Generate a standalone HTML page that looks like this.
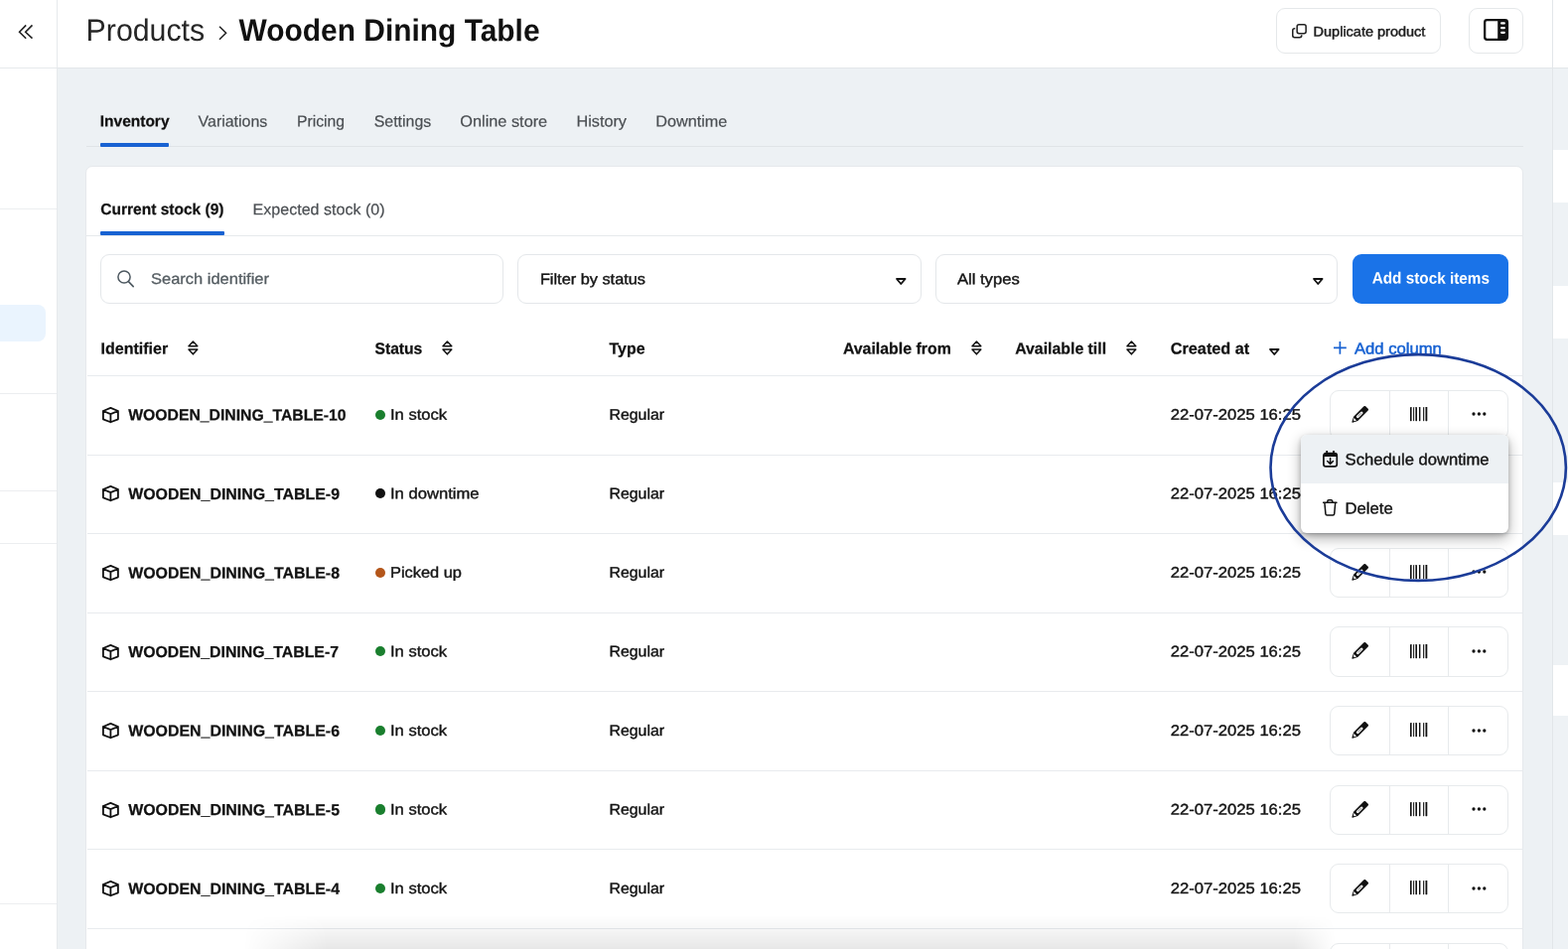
<!DOCTYPE html>
<html lang="en">
<head>
<meta charset="utf-8">
<title>Wooden Dining Table - Inventory</title>
<style>
html,body{margin:0;padding:0;width:1579px;height:956px;overflow:hidden}
body{position:relative;background:#edf1f4;font-family:"Liberation Sans", sans-serif}
#app{position:absolute;left:0;top:0;width:1579px;height:956px;overflow:hidden;background:#edf1f4}
.abs,.t,.i,.hl,.dot,.grp,.sw,.sl,.box{position:absolute}
.t{left:0;top:0;white-space:pre;line-height:1;transform-origin:0 0}
.i{overflow:visible}
.tw{position:absolute;left:0;top:0;width:1579px;height:956px;will-change:transform}
#sidebar{left:0;top:0;width:57px;height:956px;background:#fff;border-right:1px solid #e6e9ec}
.sl{left:0;width:57px;height:1px;background:#eceef0}
#navhl{left:0;top:307.4px;width:46.2px;height:36.6px;background:#eaf4fe;border-radius:0 8px 8px 0}
#header{left:58px;top:0;width:1505px;height:68px;background:#fff;border-bottom:1px solid #e3e7ea}
#sidehead{left:0;top:68px;width:57px;height:1px;background:#e6e9ec}
#rstrip{left:1563px;top:0;width:16px;height:956px;background:#eef2f5;border-left:1px solid #e2e6e9;box-sizing:border-box}
#rstrip .top{position:absolute;left:0;top:0;width:16px;height:68px;background:#fff;border-bottom:1px solid #e3e7ea}
.sw{left:0;width:16px;background:#fff}
.btn{background:#fff;border:1px solid #e5e8ea;border-radius:9px;box-sizing:border-box}
#tabline{left:87px;top:146.5px;width:1447px;height:1px;background:#e0e4e7}
#tabul{left:100.8px;top:144px;width:69.6px;height:3.5px;background:#1862d2;border-radius:1px}
#card{left:86.4px;top:166.5px;width:1447.4px;height:800px;background:#fff;border:1px solid #e6e9ec;border-radius:7px;box-sizing:border-box}
#itabline{left:87px;top:236.6px;width:1446.6px;height:1.2px;background:#e6e9ec}
#itabul{left:101px;top:233.3px;width:124.6px;height:3.5px;background:#1862d2;border-radius:1px}
.inp{top:256px;height:50px;background:#fff;border:1px solid #e4e7ea;border-radius:9px;box-sizing:border-box}
#addbtn{left:1362.4px;top:256px;width:156.6px;height:50px;background:#1a73e8;border-radius:9px}
.hl{left:87.5px;width:1445.6px;height:1.2px;background:#e8ebee}
.dot{width:10.4px;height:10.4px;border-radius:50%}
.grp{left:1339px;width:180px;height:50.4px;border:1px solid #e7eaec;border-radius:9px;box-sizing:border-box;background:#fff}
.grp i{position:absolute;top:0;width:1px;height:100%;background:#e7eaec}
.grp i:nth-child(1){left:58.5px}
.grp i:nth-child(2){left:118.3px}
#menu{left:1310px;top:438.2px;width:209.2px;height:98.4px;background:#fff;border-radius:6px;box-shadow:0 5px 14px rgba(0,0,0,.32),0 2px 5px rgba(0,0,0,.2);overflow:hidden}
#menu .sel{position:absolute;left:0;top:0;width:100%;height:49.2px;background:#edf1f4}
#botshadow{left:245px;top:922px;width:1100px;height:34px;background:linear-gradient(to bottom,rgba(0,0,0,0),rgba(0,0,0,.035) 40%,rgba(0,0,0,.095));-webkit-mask-image:linear-gradient(to right,transparent 0,#000 85px,#000 1058px,transparent 1100px);mask-image:linear-gradient(to right,transparent 0,#000 85px,#000 1058px,transparent 1100px)}
#ring{left:0;top:0}
</style>
</head>
<body>
<div id="app">
<div id="sidebar" class="abs"></div>
<div id="navhl" class="abs"></div>
<div class="sl" style="top:210px"></div><div class="sl" style="top:396px"></div><div class="sl" style="top:493.5px"></div><div class="sl" style="top:546.5px"></div><div class="sl" style="top:910px"></div>
<div id="header" class="abs"></div>
<div id="sidehead" class="abs"></div>
<div id="rstrip" class="abs"><div class="top"></div><div class="sw" style="top:150.5px;height:53.0px"></div><div class="sw" style="top:288px;height:52.5px"></div><div class="sw" style="top:486px;height:53px"></div><div class="sw" style="top:669.7px;height:51.799999999999955px"></div></div>
<div class="abs btn" style="left:1284.9px;top:8.4px;width:165.8px;height:45.2px"></div>
<div class="abs btn" style="left:1479.4px;top:8.4px;width:55.1px;height:45.2px"></div>
<div id="tabline" class="abs"></div>
<div id="tabul" class="abs"></div>
<div id="card" class="abs"></div>
<div id="itabline" class="abs"></div>
<div id="itabul" class="abs"></div>
<div class="abs inp" style="left:101px;width:406px"></div>
<div class="abs inp" style="left:521.4px;width:406.4px"></div>
<div class="abs inp" style="left:941.8px;width:405.6px"></div>
<div id="addbtn" class="abs"></div>
<div class="hl" style="top:378.0px"></div>
<div class="hl" style="top:457.6px"></div>
<div class="dot" style="left:377.8px;top:412.5px;background:#1a7f2e"></div>
<div class="grp" style="top:392.8px"><i></i><i></i></div>
<div class="hl" style="top:537.1px"></div>
<div class="dot" style="left:377.8px;top:492.0px;background:#111"></div>
<div class="grp" style="top:472.3px"><i></i><i></i></div>
<div class="hl" style="top:616.6px"></div>
<div class="dot" style="left:377.8px;top:571.6px;background:#b4561a"></div>
<div class="grp" style="top:551.9px"><i></i><i></i></div>
<div class="hl" style="top:696.2px"></div>
<div class="dot" style="left:377.8px;top:651.1px;background:#1a7f2e"></div>
<div class="grp" style="top:631.4px"><i></i><i></i></div>
<div class="hl" style="top:775.8px"></div>
<div class="dot" style="left:377.8px;top:730.7px;background:#1a7f2e"></div>
<div class="grp" style="top:711.0px"><i></i><i></i></div>
<div class="hl" style="top:855.3px"></div>
<div class="dot" style="left:377.8px;top:810.2px;background:#1a7f2e"></div>
<div class="grp" style="top:790.5px"><i></i><i></i></div>
<div class="hl" style="top:934.9px"></div>
<div class="dot" style="left:377.8px;top:889.8px;background:#1a7f2e"></div>
<div class="grp" style="top:870.1px"><i></i><i></i></div>
<div class="grp" style="top:949.6px"><i></i><i></i></div>
<svg class="i" style="left:18.0px;top:24.0px" width="16" height="16" viewBox="0 0 16 16" preserveAspectRatio="none" ><path d="M8.2 1.4 L1.6 8.3 L8.2 14.7 M14.5 1.4 L7.7 8.3 L14.5 14.7" fill="none" stroke="#222" stroke-width="1.6" stroke-linejoin="miter"/></svg>
<svg class="i" style="left:220.3px;top:25.6px" width="8.8" height="14.6" viewBox="0 0 8.8 14.6" preserveAspectRatio="none" ><path d="M1 0.8 L7.6 7.3 L1 13.8" fill="none" stroke="#222" stroke-width="1.5"/></svg>
<svg class="i" style="left:1300.9px;top:24.0px" width="14.9" height="14.4" viewBox="0 0 15.6 15.2" preserveAspectRatio="none" ><rect x="5.4" y="0.8" width="9.4" height="9.4" rx="2" fill="none" stroke="#222" stroke-width="1.6"/><path d="M3.4 5 H2.8 a2 2 0 0 0 -2 2 V12.4 a2 2 0 0 0 2 2 H8.2 a2 2 0 0 0 2 -2 V12" fill="none" stroke="#222" stroke-width="1.6"/></svg>
<svg class="i" style="left:1493.9px;top:19.4px" width="25.1" height="22" viewBox="0 0 25.1 22" preserveAspectRatio="none" ><rect x="1.15" y="1.15" width="22.8" height="19.7" rx="2.3" fill="none" stroke="#111" stroke-width="2.3"/><path d="M14.2 1.15 H21.6 a2.3 2.3 0 0 1 2.3 2.3 V18.5 a2.3 2.3 0 0 1 -2.3 2.3 H14.2 Z" fill="#111"/><rect x="17" y="3.3" width="4.9" height="2.3" rx="1.15" fill="#fff"/><rect x="17" y="8.0" width="4.9" height="2.3" rx="1.15" fill="#fff"/><rect x="17" y="12.7" width="4.9" height="2.3" rx="1.15" fill="#fff"/></svg>
<svg class="i" style="left:117.6px;top:271.8px" width="17" height="17.4" viewBox="0 0 17 17.4" preserveAspectRatio="none" ><circle cx="7" cy="7" r="6.1" fill="none" stroke="#4d5860" stroke-width="1.5"/><path d="M11.4 11.6 L16.2 16.6" stroke="#4d5860" stroke-width="1.6" stroke-linecap="round"/></svg>
<svg class="i" style="left:901.5px;top:279.6px" width="10.6" height="7" viewBox="0 0 10.6 7" preserveAspectRatio="none" ><path d="M1 1 L9.6 1 L5.3 6 Z" fill="none" stroke="#111" stroke-width="1.8" stroke-linejoin="round"/></svg>
<svg class="i" style="left:1322.1px;top:279.6px" width="10.6" height="7" viewBox="0 0 10.6 7" preserveAspectRatio="none" ><path d="M1 1 L9.6 1 L5.3 6 Z" fill="none" stroke="#111" stroke-width="1.8" stroke-linejoin="round"/></svg>
<svg class="i" style="left:188.9px;top:343.2px" width="10.8" height="14.8" viewBox="0 0 10.8 14.8" preserveAspectRatio="none" ><path d="M1 5.7 L5.4 0.95 L9.8 5.7 Z" fill="none" stroke="#111" stroke-width="1.5" stroke-linejoin="round"/><path d="M1 9.1 L5.4 13.85 L9.8 9.1 Z" fill="none" stroke="#111" stroke-width="1.5" stroke-linejoin="round"/></svg>
<svg class="i" style="left:444.8px;top:343.2px" width="10.8" height="14.8" viewBox="0 0 10.8 14.8" preserveAspectRatio="none" ><path d="M1 5.7 L5.4 0.95 L9.8 5.7 Z" fill="none" stroke="#111" stroke-width="1.5" stroke-linejoin="round"/><path d="M1 9.1 L5.4 13.85 L9.8 9.1 Z" fill="none" stroke="#111" stroke-width="1.5" stroke-linejoin="round"/></svg>
<svg class="i" style="left:977.8px;top:343.2px" width="10.8" height="14.8" viewBox="0 0 10.8 14.8" preserveAspectRatio="none" ><path d="M1 5.7 L5.4 0.95 L9.8 5.7 Z" fill="none" stroke="#111" stroke-width="1.5" stroke-linejoin="round"/><path d="M1 9.1 L5.4 13.85 L9.8 9.1 Z" fill="none" stroke="#111" stroke-width="1.5" stroke-linejoin="round"/></svg>
<svg class="i" style="left:1134.1px;top:343.2px" width="10.8" height="14.8" viewBox="0 0 10.8 14.8" preserveAspectRatio="none" ><path d="M1 5.7 L5.4 0.95 L9.8 5.7 Z" fill="none" stroke="#111" stroke-width="1.5" stroke-linejoin="round"/><path d="M1 9.1 L5.4 13.85 L9.8 9.1 Z" fill="none" stroke="#111" stroke-width="1.5" stroke-linejoin="round"/></svg>
<svg class="i" style="left:1277.7px;top:351.1px" width="10.6" height="7" viewBox="0 0 10.6 7" preserveAspectRatio="none" ><path d="M1 1 L9.6 1 L5.3 6 Z" fill="none" stroke="#111" stroke-width="1.8" stroke-linejoin="round"/></svg>
<svg class="i" style="left:1343.0px;top:344.0px" width="12.8" height="12.8" viewBox="0 0 12.8 12.8" preserveAspectRatio="none" ><path d="M6.4 0 V12.8 M0 6.4 H12.8" stroke="#1862d2" stroke-width="1.7"/></svg>
<svg class="i" style="left:103.1px;top:409.9px" width="16.8" height="16.2" viewBox="0 0 16.8 16.2" preserveAspectRatio="none" ><path d="M8.4 0.9 L15.9 4 L15.9 12.3 L8.4 15.3 L0.9 12.3 L0.9 4 Z M0.9 4 L8.4 7.2 L15.9 4 M8.4 7.2 L8.4 15.3" fill="none" stroke="#111" stroke-width="1.8" stroke-linejoin="round" stroke-linecap="round"/></svg>
<svg class="i" style="left:1356.5px;top:405.7px" width="24" height="24" viewBox="-12 -12 24 24" preserveAspectRatio="none" ><g transform="rotate(45)"><path d="M-1.8 -10.5 H1.8 A1.2 1.2 0 0 1 3 -9.3 V5.4 L0.5 10.3 Q0 10.9 -0.5 10.3 L-3 5.4 V-9.3 A1.2 1.2 0 0 1 -1.8 -10.5 Z" fill="#111"/><path d="M-1.7 6 H1.7 L0.7 8 H-0.7 Z" fill="#fff"/><rect x="-1.35" y="-4.4" width="2.7" height="8.2" rx="1.35" fill="#fff"/><rect x="-0.25" y="-2.8" width="0.5" height="5" rx="0.25" fill="#333"/></g></svg>
<svg class="i" style="left:1420.4px;top:410.0px" width="17.3" height="14.2" viewBox="0 0 17.3 14.2" preserveAspectRatio="none" ><rect x="0" y="0" width="1.6" height="14.2" rx="0.4" fill="#111"/><rect x="3.1" y="0" width="1.0" height="14.2" rx="0.4" fill="#111"/><rect x="5.4" y="0" width="1.6" height="14.2" rx="0.4" fill="#111"/><rect x="9.0" y="0" width="1.4" height="14.2" rx="0.4" fill="#111"/><rect x="13.1" y="0" width="1.1" height="14.2" rx="0.4" fill="#111"/><rect x="15.5" y="0" width="1.8" height="14.2" rx="0.4" fill="#111"/></svg>
<svg class="i" style="left:1482.1px;top:415.3px" width="14.8" height="4" viewBox="0 0 14.8 4" preserveAspectRatio="none" ><circle cx="2" cy="2" r="1.65" fill="#111"/><circle cx="7.4" cy="2" r="1.65" fill="#111"/><circle cx="12.8" cy="2" r="1.65" fill="#111"/></svg>
<svg class="i" style="left:103.1px;top:489.4px" width="16.8" height="16.2" viewBox="0 0 16.8 16.2" preserveAspectRatio="none" ><path d="M8.4 0.9 L15.9 4 L15.9 12.3 L8.4 15.3 L0.9 12.3 L0.9 4 Z M0.9 4 L8.4 7.2 L15.9 4 M8.4 7.2 L8.4 15.3" fill="none" stroke="#111" stroke-width="1.8" stroke-linejoin="round" stroke-linecap="round"/></svg>
<svg class="i" style="left:1356.5px;top:485.3px" width="24" height="24" viewBox="-12 -12 24 24" preserveAspectRatio="none" ><g transform="rotate(45)"><path d="M-1.8 -10.5 H1.8 A1.2 1.2 0 0 1 3 -9.3 V5.4 L0.5 10.3 Q0 10.9 -0.5 10.3 L-3 5.4 V-9.3 A1.2 1.2 0 0 1 -1.8 -10.5 Z" fill="#111"/><path d="M-1.7 6 H1.7 L0.7 8 H-0.7 Z" fill="#fff"/><rect x="-1.35" y="-4.4" width="2.7" height="8.2" rx="1.35" fill="#fff"/><rect x="-0.25" y="-2.8" width="0.5" height="5" rx="0.25" fill="#333"/></g></svg>
<svg class="i" style="left:1420.4px;top:489.5px" width="17.3" height="14.2" viewBox="0 0 17.3 14.2" preserveAspectRatio="none" ><rect x="0" y="0" width="1.6" height="14.2" rx="0.4" fill="#111"/><rect x="3.1" y="0" width="1.0" height="14.2" rx="0.4" fill="#111"/><rect x="5.4" y="0" width="1.6" height="14.2" rx="0.4" fill="#111"/><rect x="9.0" y="0" width="1.4" height="14.2" rx="0.4" fill="#111"/><rect x="13.1" y="0" width="1.1" height="14.2" rx="0.4" fill="#111"/><rect x="15.5" y="0" width="1.8" height="14.2" rx="0.4" fill="#111"/></svg>
<svg class="i" style="left:1482.1px;top:494.8px" width="14.8" height="4" viewBox="0 0 14.8 4" preserveAspectRatio="none" ><circle cx="2" cy="2" r="1.65" fill="#111"/><circle cx="7.4" cy="2" r="1.65" fill="#111"/><circle cx="12.8" cy="2" r="1.65" fill="#111"/></svg>
<svg class="i" style="left:103.1px;top:569.0px" width="16.8" height="16.2" viewBox="0 0 16.8 16.2" preserveAspectRatio="none" ><path d="M8.4 0.9 L15.9 4 L15.9 12.3 L8.4 15.3 L0.9 12.3 L0.9 4 Z M0.9 4 L8.4 7.2 L15.9 4 M8.4 7.2 L8.4 15.3" fill="none" stroke="#111" stroke-width="1.8" stroke-linejoin="round" stroke-linecap="round"/></svg>
<svg class="i" style="left:1356.5px;top:564.8px" width="24" height="24" viewBox="-12 -12 24 24" preserveAspectRatio="none" ><g transform="rotate(45)"><path d="M-1.8 -10.5 H1.8 A1.2 1.2 0 0 1 3 -9.3 V5.4 L0.5 10.3 Q0 10.9 -0.5 10.3 L-3 5.4 V-9.3 A1.2 1.2 0 0 1 -1.8 -10.5 Z" fill="#111"/><path d="M-1.7 6 H1.7 L0.7 8 H-0.7 Z" fill="#fff"/><rect x="-1.35" y="-4.4" width="2.7" height="8.2" rx="1.35" fill="#fff"/><rect x="-0.25" y="-2.8" width="0.5" height="5" rx="0.25" fill="#333"/></g></svg>
<svg class="i" style="left:1420.4px;top:569.1px" width="17.3" height="14.2" viewBox="0 0 17.3 14.2" preserveAspectRatio="none" ><rect x="0" y="0" width="1.6" height="14.2" rx="0.4" fill="#111"/><rect x="3.1" y="0" width="1.0" height="14.2" rx="0.4" fill="#111"/><rect x="5.4" y="0" width="1.6" height="14.2" rx="0.4" fill="#111"/><rect x="9.0" y="0" width="1.4" height="14.2" rx="0.4" fill="#111"/><rect x="13.1" y="0" width="1.1" height="14.2" rx="0.4" fill="#111"/><rect x="15.5" y="0" width="1.8" height="14.2" rx="0.4" fill="#111"/></svg>
<svg class="i" style="left:1482.1px;top:574.4px" width="14.8" height="4" viewBox="0 0 14.8 4" preserveAspectRatio="none" ><circle cx="2" cy="2" r="1.65" fill="#111"/><circle cx="7.4" cy="2" r="1.65" fill="#111"/><circle cx="12.8" cy="2" r="1.65" fill="#111"/></svg>
<svg class="i" style="left:103.1px;top:648.5px" width="16.8" height="16.2" viewBox="0 0 16.8 16.2" preserveAspectRatio="none" ><path d="M8.4 0.9 L15.9 4 L15.9 12.3 L8.4 15.3 L0.9 12.3 L0.9 4 Z M0.9 4 L8.4 7.2 L15.9 4 M8.4 7.2 L8.4 15.3" fill="none" stroke="#111" stroke-width="1.8" stroke-linejoin="round" stroke-linecap="round"/></svg>
<svg class="i" style="left:1356.5px;top:644.4px" width="24" height="24" viewBox="-12 -12 24 24" preserveAspectRatio="none" ><g transform="rotate(45)"><path d="M-1.8 -10.5 H1.8 A1.2 1.2 0 0 1 3 -9.3 V5.4 L0.5 10.3 Q0 10.9 -0.5 10.3 L-3 5.4 V-9.3 A1.2 1.2 0 0 1 -1.8 -10.5 Z" fill="#111"/><path d="M-1.7 6 H1.7 L0.7 8 H-0.7 Z" fill="#fff"/><rect x="-1.35" y="-4.4" width="2.7" height="8.2" rx="1.35" fill="#fff"/><rect x="-0.25" y="-2.8" width="0.5" height="5" rx="0.25" fill="#333"/></g></svg>
<svg class="i" style="left:1420.4px;top:648.6px" width="17.3" height="14.2" viewBox="0 0 17.3 14.2" preserveAspectRatio="none" ><rect x="0" y="0" width="1.6" height="14.2" rx="0.4" fill="#111"/><rect x="3.1" y="0" width="1.0" height="14.2" rx="0.4" fill="#111"/><rect x="5.4" y="0" width="1.6" height="14.2" rx="0.4" fill="#111"/><rect x="9.0" y="0" width="1.4" height="14.2" rx="0.4" fill="#111"/><rect x="13.1" y="0" width="1.1" height="14.2" rx="0.4" fill="#111"/><rect x="15.5" y="0" width="1.8" height="14.2" rx="0.4" fill="#111"/></svg>
<svg class="i" style="left:1482.1px;top:653.9px" width="14.8" height="4" viewBox="0 0 14.8 4" preserveAspectRatio="none" ><circle cx="2" cy="2" r="1.65" fill="#111"/><circle cx="7.4" cy="2" r="1.65" fill="#111"/><circle cx="12.8" cy="2" r="1.65" fill="#111"/></svg>
<svg class="i" style="left:103.1px;top:728.1px" width="16.8" height="16.2" viewBox="0 0 16.8 16.2" preserveAspectRatio="none" ><path d="M8.4 0.9 L15.9 4 L15.9 12.3 L8.4 15.3 L0.9 12.3 L0.9 4 Z M0.9 4 L8.4 7.2 L15.9 4 M8.4 7.2 L8.4 15.3" fill="none" stroke="#111" stroke-width="1.8" stroke-linejoin="round" stroke-linecap="round"/></svg>
<svg class="i" style="left:1356.5px;top:723.9px" width="24" height="24" viewBox="-12 -12 24 24" preserveAspectRatio="none" ><g transform="rotate(45)"><path d="M-1.8 -10.5 H1.8 A1.2 1.2 0 0 1 3 -9.3 V5.4 L0.5 10.3 Q0 10.9 -0.5 10.3 L-3 5.4 V-9.3 A1.2 1.2 0 0 1 -1.8 -10.5 Z" fill="#111"/><path d="M-1.7 6 H1.7 L0.7 8 H-0.7 Z" fill="#fff"/><rect x="-1.35" y="-4.4" width="2.7" height="8.2" rx="1.35" fill="#fff"/><rect x="-0.25" y="-2.8" width="0.5" height="5" rx="0.25" fill="#333"/></g></svg>
<svg class="i" style="left:1420.4px;top:728.2px" width="17.3" height="14.2" viewBox="0 0 17.3 14.2" preserveAspectRatio="none" ><rect x="0" y="0" width="1.6" height="14.2" rx="0.4" fill="#111"/><rect x="3.1" y="0" width="1.0" height="14.2" rx="0.4" fill="#111"/><rect x="5.4" y="0" width="1.6" height="14.2" rx="0.4" fill="#111"/><rect x="9.0" y="0" width="1.4" height="14.2" rx="0.4" fill="#111"/><rect x="13.1" y="0" width="1.1" height="14.2" rx="0.4" fill="#111"/><rect x="15.5" y="0" width="1.8" height="14.2" rx="0.4" fill="#111"/></svg>
<svg class="i" style="left:1482.1px;top:733.5px" width="14.8" height="4" viewBox="0 0 14.8 4" preserveAspectRatio="none" ><circle cx="2" cy="2" r="1.65" fill="#111"/><circle cx="7.4" cy="2" r="1.65" fill="#111"/><circle cx="12.8" cy="2" r="1.65" fill="#111"/></svg>
<svg class="i" style="left:103.1px;top:807.6px" width="16.8" height="16.2" viewBox="0 0 16.8 16.2" preserveAspectRatio="none" ><path d="M8.4 0.9 L15.9 4 L15.9 12.3 L8.4 15.3 L0.9 12.3 L0.9 4 Z M0.9 4 L8.4 7.2 L15.9 4 M8.4 7.2 L8.4 15.3" fill="none" stroke="#111" stroke-width="1.8" stroke-linejoin="round" stroke-linecap="round"/></svg>
<svg class="i" style="left:1356.5px;top:803.5px" width="24" height="24" viewBox="-12 -12 24 24" preserveAspectRatio="none" ><g transform="rotate(45)"><path d="M-1.8 -10.5 H1.8 A1.2 1.2 0 0 1 3 -9.3 V5.4 L0.5 10.3 Q0 10.9 -0.5 10.3 L-3 5.4 V-9.3 A1.2 1.2 0 0 1 -1.8 -10.5 Z" fill="#111"/><path d="M-1.7 6 H1.7 L0.7 8 H-0.7 Z" fill="#fff"/><rect x="-1.35" y="-4.4" width="2.7" height="8.2" rx="1.35" fill="#fff"/><rect x="-0.25" y="-2.8" width="0.5" height="5" rx="0.25" fill="#333"/></g></svg>
<svg class="i" style="left:1420.4px;top:807.7px" width="17.3" height="14.2" viewBox="0 0 17.3 14.2" preserveAspectRatio="none" ><rect x="0" y="0" width="1.6" height="14.2" rx="0.4" fill="#111"/><rect x="3.1" y="0" width="1.0" height="14.2" rx="0.4" fill="#111"/><rect x="5.4" y="0" width="1.6" height="14.2" rx="0.4" fill="#111"/><rect x="9.0" y="0" width="1.4" height="14.2" rx="0.4" fill="#111"/><rect x="13.1" y="0" width="1.1" height="14.2" rx="0.4" fill="#111"/><rect x="15.5" y="0" width="1.8" height="14.2" rx="0.4" fill="#111"/></svg>
<svg class="i" style="left:1482.1px;top:813.0px" width="14.8" height="4" viewBox="0 0 14.8 4" preserveAspectRatio="none" ><circle cx="2" cy="2" r="1.65" fill="#111"/><circle cx="7.4" cy="2" r="1.65" fill="#111"/><circle cx="12.8" cy="2" r="1.65" fill="#111"/></svg>
<svg class="i" style="left:103.1px;top:887.2px" width="16.8" height="16.2" viewBox="0 0 16.8 16.2" preserveAspectRatio="none" ><path d="M8.4 0.9 L15.9 4 L15.9 12.3 L8.4 15.3 L0.9 12.3 L0.9 4 Z M0.9 4 L8.4 7.2 L15.9 4 M8.4 7.2 L8.4 15.3" fill="none" stroke="#111" stroke-width="1.8" stroke-linejoin="round" stroke-linecap="round"/></svg>
<svg class="i" style="left:1356.5px;top:883.0px" width="24" height="24" viewBox="-12 -12 24 24" preserveAspectRatio="none" ><g transform="rotate(45)"><path d="M-1.8 -10.5 H1.8 A1.2 1.2 0 0 1 3 -9.3 V5.4 L0.5 10.3 Q0 10.9 -0.5 10.3 L-3 5.4 V-9.3 A1.2 1.2 0 0 1 -1.8 -10.5 Z" fill="#111"/><path d="M-1.7 6 H1.7 L0.7 8 H-0.7 Z" fill="#fff"/><rect x="-1.35" y="-4.4" width="2.7" height="8.2" rx="1.35" fill="#fff"/><rect x="-0.25" y="-2.8" width="0.5" height="5" rx="0.25" fill="#333"/></g></svg>
<svg class="i" style="left:1420.4px;top:887.3px" width="17.3" height="14.2" viewBox="0 0 17.3 14.2" preserveAspectRatio="none" ><rect x="0" y="0" width="1.6" height="14.2" rx="0.4" fill="#111"/><rect x="3.1" y="0" width="1.0" height="14.2" rx="0.4" fill="#111"/><rect x="5.4" y="0" width="1.6" height="14.2" rx="0.4" fill="#111"/><rect x="9.0" y="0" width="1.4" height="14.2" rx="0.4" fill="#111"/><rect x="13.1" y="0" width="1.1" height="14.2" rx="0.4" fill="#111"/><rect x="15.5" y="0" width="1.8" height="14.2" rx="0.4" fill="#111"/></svg>
<svg class="i" style="left:1482.1px;top:892.6px" width="14.8" height="4" viewBox="0 0 14.8 4" preserveAspectRatio="none" ><circle cx="2" cy="2" r="1.65" fill="#111"/><circle cx="7.4" cy="2" r="1.65" fill="#111"/><circle cx="12.8" cy="2" r="1.65" fill="#111"/></svg>
<div class="tw"><header>
<span class="t" style="font-size:31.2px;font-weight:400;color:#262626;transform:translate(86.60px,15.00px) rotate(.03deg) scaleX(0.9717)">Products</span>
<span class="t" style="font-size:31.2px;font-weight:700;color:#111;transform:translate(240.60px,15.00px) rotate(.03deg) scaleX(0.9591)">Wooden Dining Table</span>
<span class="t" style="font-size:14px;-webkit-text-stroke:0.45px #1c1c1c;font-weight:400;color:#1c1c1c;transform:translate(1322.60px,24.54px) rotate(.03deg) scaleX(1.0353)">Duplicate product</span>
</header>
<nav aria-label="Product sections">
<span class="t" style="font-size:15.8px;-webkit-text-stroke:0.25px #111;font-weight:700;color:#111;transform:translate(100.80px,114.25px) rotate(.03deg) scaleX(0.9802)">Inventory</span>
<span class="t" style="font-size:16.0px;-webkit-text-stroke:0.2px #4a4e52;font-weight:400;color:#4a4e52;transform:translate(199.60px,114.60px) rotate(.03deg) scaleX(0.9962)">Variations</span>
<span class="t" style="font-size:16.0px;-webkit-text-stroke:0.2px #4a4e52;font-weight:400;color:#4a4e52;transform:translate(298.90px,114.60px) rotate(.03deg) scaleX(0.9835)">Pricing</span>
<span class="t" style="font-size:16.0px;-webkit-text-stroke:0.2px #4a4e52;font-weight:400;color:#4a4e52;transform:translate(376.70px,114.60px) rotate(.03deg) scaleX(0.9946)">Settings</span>
<span class="t" style="font-size:16.0px;-webkit-text-stroke:0.2px #4a4e52;font-weight:400;color:#4a4e52;transform:translate(463.30px,114.60px) rotate(.03deg) scaleX(1.0189)">Online store</span>
<span class="t" style="font-size:16.0px;-webkit-text-stroke:0.2px #4a4e52;font-weight:400;color:#4a4e52;transform:translate(580.40px,114.60px) rotate(.03deg) scaleX(1.0164)">History</span>
<span class="t" style="font-size:16.0px;-webkit-text-stroke:0.2px #4a4e52;font-weight:400;color:#4a4e52;transform:translate(660.20px,114.60px) rotate(.03deg) scaleX(1.0149)">Downtime</span>
</nav>
<nav aria-label="Stock">
<span class="t" style="font-size:15.7px;-webkit-text-stroke:0.25px #111;font-weight:700;color:#111;transform:translate(101.30px,203.05px) rotate(.03deg) scaleX(0.9894)">Current stock (9)</span>
<span class="t" style="font-size:15.7px;-webkit-text-stroke:0.2px #4a4e52;font-weight:400;color:#4a4e52;transform:translate(254.60px,203.30px) rotate(.03deg) scaleX(1.0237)">Expected stock (0)</span>
</nav>
<div role="toolbar">
<span class="t" style="font-size:15.3px;-webkit-text-stroke:0.3px #555d62;font-weight:400;color:#555d62;transform:translate(152.00px,272.93px) rotate(.03deg) scaleX(1.0765)">Search identifier</span>
<span class="t" style="font-size:15.3px;-webkit-text-stroke:0.4px #141414;font-weight:400;color:#141414;transform:translate(543.90px,273.32px) rotate(.03deg) scaleX(1.0667)">Filter by status</span>
<span class="t" style="font-size:15.3px;-webkit-text-stroke:0.4px #141414;font-weight:400;color:#141414;transform:translate(963.90px,273.32px) rotate(.03deg) scaleX(1.0863)">All types</span>
<span class="t" style="font-size:16.3px;font-weight:700;color:#fff;transform:translate(1381.70px,271.60px) rotate(.03deg) scaleX(0.9406)">Add stock items</span>
</div>
<div role="row">
<span class="t" style="font-size:16.1px;-webkit-text-stroke:0.25px #111;font-weight:700;color:#111;transform:translate(101.60px,342.55px) rotate(.03deg) scaleX(0.9946)">Identifier</span>
<span class="t" style="font-size:16.1px;-webkit-text-stroke:0.25px #111;font-weight:700;color:#111;transform:translate(377.50px,342.55px) rotate(.03deg) scaleX(0.9718)">Status</span>
<span class="t" style="font-size:16.1px;-webkit-text-stroke:0.25px #111;font-weight:700;color:#111;transform:translate(613.60px,342.55px) rotate(.03deg) scaleX(0.9869)">Type</span>
<span class="t" style="font-size:16.1px;-webkit-text-stroke:0.25px #111;font-weight:700;color:#111;transform:translate(848.90px,342.55px) rotate(.03deg) scaleX(0.9872)">Available from</span>
<span class="t" style="font-size:16.1px;-webkit-text-stroke:0.25px #111;font-weight:700;color:#111;transform:translate(1022.20px,342.55px) rotate(.03deg) scaleX(0.9847)">Available till</span>
<span class="t" style="font-size:16.1px;-webkit-text-stroke:0.25px #111;font-weight:700;color:#111;transform:translate(1178.70px,342.55px) rotate(.03deg) scaleX(1.0112)">Created at</span>
<span class="t" style="font-size:16.0px;-webkit-text-stroke:0.5px #1862d2;font-weight:400;color:#1862d2;transform:translate(1363.90px,343.55px) rotate(.03deg) scaleX(1.0402)">Add column</span>
</div>
<div role="row">
<span class="t" style="font-size:15.9px;-webkit-text-stroke:0.25px #111;font-weight:700;color:#111;transform:translate(129.20px,410.32px) rotate(.03deg) scaleX(0.9914)">WOODEN_DINING_TABLE-10</span>
<span class="t" style="font-size:15.3px;-webkit-text-stroke:0.4px #141414;font-weight:400;color:#141414;transform:translate(393.00px,409.70px) rotate(.03deg) scaleX(1.0812)">In stock</span>
<span class="t" style="font-size:15.3px;-webkit-text-stroke:0.4px #141414;font-weight:400;color:#141414;transform:translate(613.50px,409.70px) rotate(.03deg) scaleX(1.0359)">Regular</span>
<span class="t" style="font-size:15.3px;-webkit-text-stroke:0.4px #141414;font-weight:400;color:#141414;transform:translate(1178.70px,409.70px) rotate(.03deg) scaleX(1.0871)">22-07-2025 16:25</span>
</div>
<div role="row">
<span class="t" style="font-size:15.9px;-webkit-text-stroke:0.25px #111;font-weight:700;color:#111;transform:translate(129.20px,489.87px) rotate(.03deg) scaleX(1.0015)">WOODEN_DINING_TABLE-9</span>
<span class="t" style="font-size:15.3px;-webkit-text-stroke:0.4px #141414;font-weight:400;color:#141414;transform:translate(393.00px,489.25px) rotate(.03deg) scaleX(1.0851)">In downtime</span>
<span class="t" style="font-size:15.3px;-webkit-text-stroke:0.4px #141414;font-weight:400;color:#141414;transform:translate(613.50px,489.25px) rotate(.03deg) scaleX(1.0359)">Regular</span>
<span class="t" style="font-size:15.3px;-webkit-text-stroke:0.4px #141414;font-weight:400;color:#141414;transform:translate(1178.70px,489.25px) rotate(.03deg) scaleX(1.0871)">22-07-2025 16:25</span>
</div>
<div role="row">
<span class="t" style="font-size:15.9px;-webkit-text-stroke:0.25px #111;font-weight:700;color:#111;transform:translate(129.20px,569.42px) rotate(.03deg) scaleX(1.0015)">WOODEN_DINING_TABLE-8</span>
<span class="t" style="font-size:15.3px;-webkit-text-stroke:0.4px #141414;font-weight:400;color:#141414;transform:translate(393.00px,568.80px) rotate(.03deg) scaleX(1.0716)">Picked up</span>
<span class="t" style="font-size:15.3px;-webkit-text-stroke:0.4px #141414;font-weight:400;color:#141414;transform:translate(613.50px,568.80px) rotate(.03deg) scaleX(1.0359)">Regular</span>
<span class="t" style="font-size:15.3px;-webkit-text-stroke:0.4px #141414;font-weight:400;color:#141414;transform:translate(1178.70px,568.80px) rotate(.03deg) scaleX(1.0871)">22-07-2025 16:25</span>
</div>
<div role="row">
<span class="t" style="font-size:15.9px;-webkit-text-stroke:0.25px #111;font-weight:700;color:#111;transform:translate(129.20px,648.97px) rotate(.03deg) scaleX(0.9968)">WOODEN_DINING_TABLE-7</span>
<span class="t" style="font-size:15.3px;-webkit-text-stroke:0.4px #141414;font-weight:400;color:#141414;transform:translate(393.00px,648.35px) rotate(.03deg) scaleX(1.0812)">In stock</span>
<span class="t" style="font-size:15.3px;-webkit-text-stroke:0.4px #141414;font-weight:400;color:#141414;transform:translate(613.50px,648.35px) rotate(.03deg) scaleX(1.0359)">Regular</span>
<span class="t" style="font-size:15.3px;-webkit-text-stroke:0.4px #141414;font-weight:400;color:#141414;transform:translate(1178.70px,648.35px) rotate(.03deg) scaleX(1.0871)">22-07-2025 16:25</span>
</div>
<div role="row">
<span class="t" style="font-size:15.9px;-webkit-text-stroke:0.25px #111;font-weight:700;color:#111;transform:translate(129.20px,728.52px) rotate(.03deg) scaleX(1.0015)">WOODEN_DINING_TABLE-6</span>
<span class="t" style="font-size:15.3px;-webkit-text-stroke:0.4px #141414;font-weight:400;color:#141414;transform:translate(393.00px,727.90px) rotate(.03deg) scaleX(1.0812)">In stock</span>
<span class="t" style="font-size:15.3px;-webkit-text-stroke:0.4px #141414;font-weight:400;color:#141414;transform:translate(613.50px,727.90px) rotate(.03deg) scaleX(1.0359)">Regular</span>
<span class="t" style="font-size:15.3px;-webkit-text-stroke:0.4px #141414;font-weight:400;color:#141414;transform:translate(1178.70px,727.90px) rotate(.03deg) scaleX(1.0871)">22-07-2025 16:25</span>
</div>
<div role="row">
<span class="t" style="font-size:15.9px;-webkit-text-stroke:0.25px #111;font-weight:700;color:#111;transform:translate(129.20px,808.07px) rotate(.03deg) scaleX(1.0015)">WOODEN_DINING_TABLE-5</span>
<span class="t" style="font-size:15.3px;-webkit-text-stroke:0.4px #141414;font-weight:400;color:#141414;transform:translate(393.00px,807.45px) rotate(.03deg) scaleX(1.0812)">In stock</span>
<span class="t" style="font-size:15.3px;-webkit-text-stroke:0.4px #141414;font-weight:400;color:#141414;transform:translate(613.50px,807.45px) rotate(.03deg) scaleX(1.0359)">Regular</span>
<span class="t" style="font-size:15.3px;-webkit-text-stroke:0.4px #141414;font-weight:400;color:#141414;transform:translate(1178.70px,807.45px) rotate(.03deg) scaleX(1.0871)">22-07-2025 16:25</span>
</div>
<div role="row">
<span class="t" style="font-size:15.9px;-webkit-text-stroke:0.25px #111;font-weight:700;color:#111;transform:translate(129.20px,887.62px) rotate(.03deg) scaleX(1.0015)">WOODEN_DINING_TABLE-4</span>
<span class="t" style="font-size:15.3px;-webkit-text-stroke:0.4px #141414;font-weight:400;color:#141414;transform:translate(393.00px,887.00px) rotate(.03deg) scaleX(1.0812)">In stock</span>
<span class="t" style="font-size:15.3px;-webkit-text-stroke:0.4px #141414;font-weight:400;color:#141414;transform:translate(613.50px,887.00px) rotate(.03deg) scaleX(1.0359)">Regular</span>
<span class="t" style="font-size:15.3px;-webkit-text-stroke:0.4px #141414;font-weight:400;color:#141414;transform:translate(1178.70px,887.00px) rotate(.03deg) scaleX(1.0871)">22-07-2025 16:25</span>
</div></div>
<div id="botshadow" class="abs"></div>
<div id="menu" class="abs"><div class="sel"></div></div>
<svg class="i" style="left:1331.8px;top:453.8px" width="15.2" height="16.8" viewBox="0 0 15.2 16.8" preserveAspectRatio="none" ><rect x="0.9" y="2.6" width="13.4" height="13.3" rx="2.2" fill="none" stroke="#111" stroke-width="1.7"/><path d="M0.9 4.8 a2.2 2.2 0 0 1 2.2 -2.2 H12.1 a2.2 2.2 0 0 1 2.2 2.2 V6.1 H0.9 Z" fill="#111"/><path d="M4.2 0 V3 M11 0 V3" stroke="#111" stroke-width="1.8"/><path d="M7.6 7.6 V13 M4.7 10.5 L7.6 13.4 L10.5 10.5" fill="none" stroke="#111" stroke-width="1.5" stroke-linecap="round" stroke-linejoin="round"/></svg>
<svg class="i" style="left:1332.0px;top:503.2px" width="14.6" height="16.9" viewBox="0 0 14.6 16.4" preserveAspectRatio="none" ><path d="M0.6 3.2 H14 M4.8 3 V2 a1.2 1.2 0 0 1 1.2 -1.2 H8.6 a1.2 1.2 0 0 1 1.2 1.2 V3" fill="none" stroke="#111" stroke-width="1.5" stroke-linecap="round"/><path d="M1.9 3.4 L2.9 14.2 a1.5 1.5 0 0 0 1.5 1.4 H10.2 a1.5 1.5 0 0 0 1.5 -1.4 L12.7 3.4" fill="none" stroke="#111" stroke-width="1.5"/></svg>
<div class="tw"><div role="menu">
<span class="t" style="font-size:16.1px;-webkit-text-stroke:0.4px #141414;font-weight:400;color:#141414;transform:translate(1354.60px,454.25px) rotate(.03deg) scaleX(1.0323)">Schedule downtime</span>
<span class="t" style="font-size:16.1px;-webkit-text-stroke:0.4px #141414;font-weight:400;color:#141414;transform:translate(1354.60px,503.45px) rotate(.03deg) scaleX(1.0337)">Delete</span>
</div></div>
<svg id="ring" class="abs" width="1579" height="956" viewBox="0 0 1579 956"><ellipse cx="1428.2" cy="471" rx="148.7" ry="113.9" fill="none" stroke="#1b3c98" stroke-width="2.6"/></svg>
</div>
</body>
</html>
